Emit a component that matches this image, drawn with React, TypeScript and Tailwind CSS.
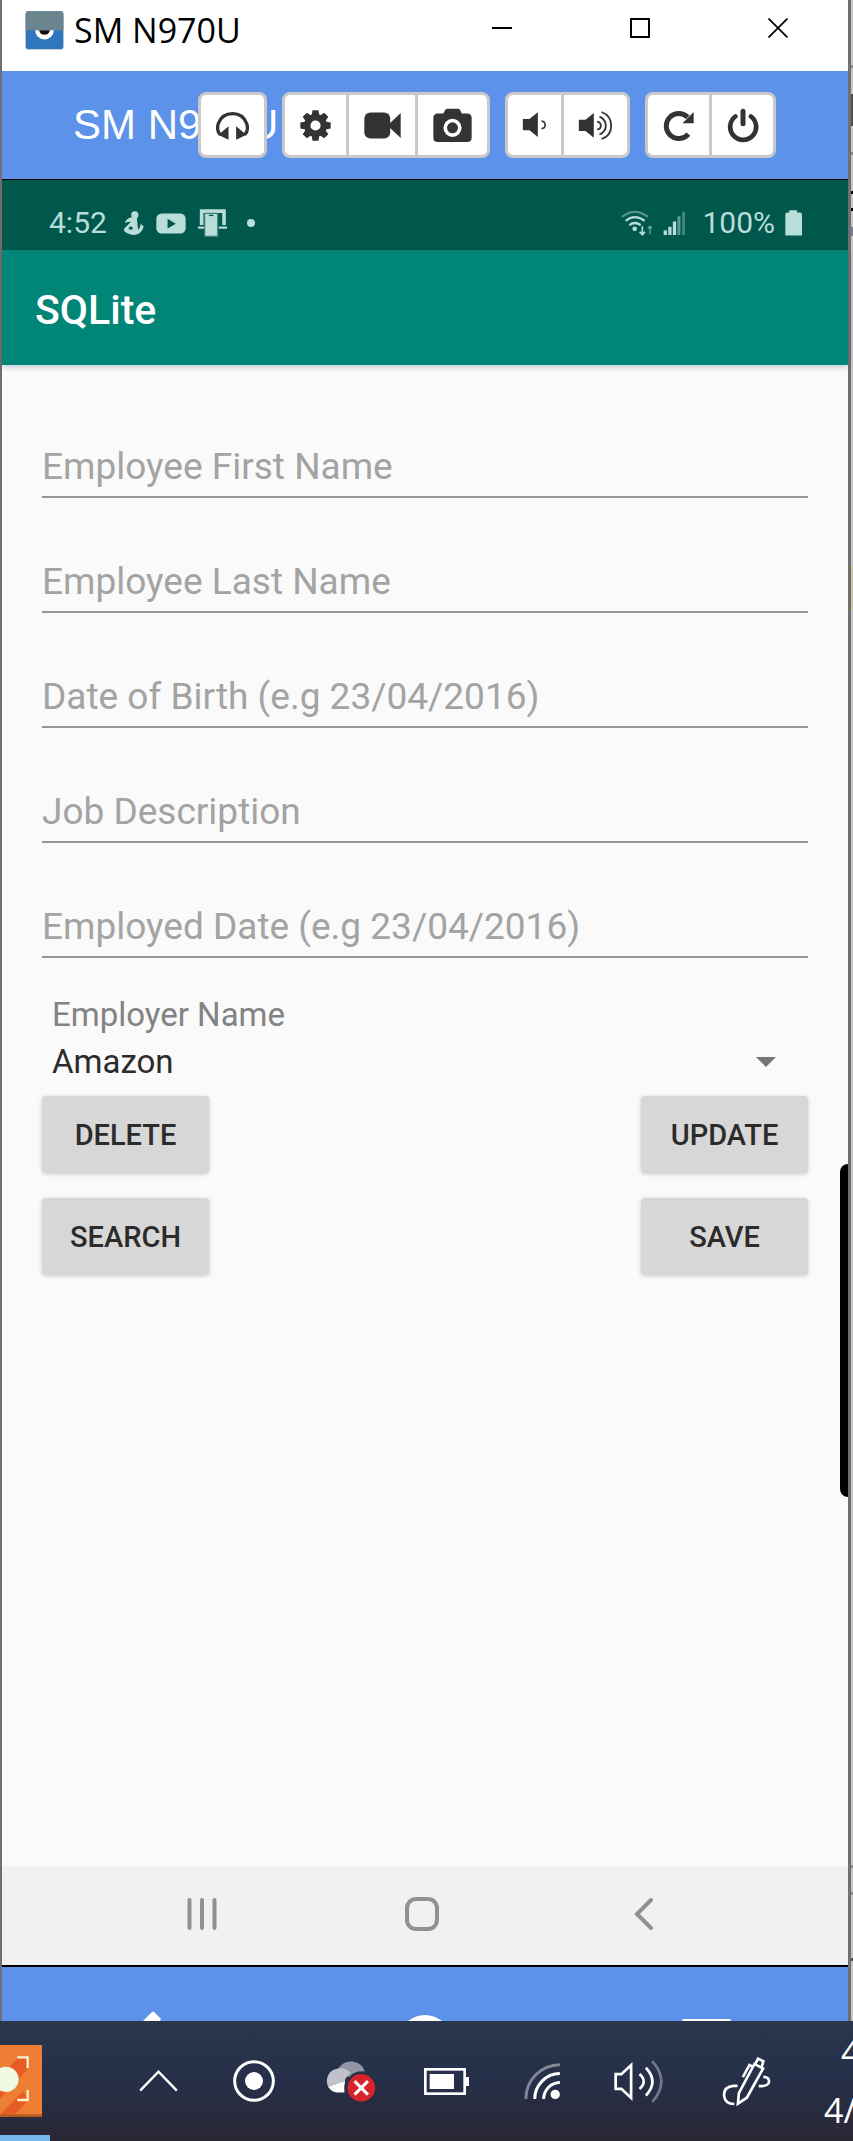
import React from "react";

/* ---------- window chrome ---------- */

const AppLogo = () => (
  <svg viewBox="74 26 116 118" className="h-[39px] w-[39px] shrink-0" aria-hidden="true">
    <rect x="75" y="30" width="114" height="114" rx="7" fill="#c9ccd0" />
    <rect x="75" y="27" width="114" height="114" rx="7" fill="#2f76bd" />
    <path d="M75 84V34a7 7 0 0 1 7-7h100a7 7 0 0 1 7 7v50z" fill="#6b858f" />
    <path d="M104 84a28 28 0 0 0 56 0z" fill="#fff" />
    <path d="M116 84a16 14 0 0 0 32 0z" fill="#111" />
  </svg>
);

const MinimizeIcon = () => (
  <svg viewBox="0 0 20 20" className="h-5 w-5" aria-hidden="true">
    <path d="M0 10h20" stroke="#000" strokeWidth="2" />
  </svg>
);
const MaximizeIcon = () => (
  <svg viewBox="0 0 20 20" className="h-5 w-5" aria-hidden="true">
    <rect x="1" y="1" width="18" height="18" fill="none" stroke="#000" strokeWidth="2" />
  </svg>
);
const CloseIcon = () => (
  <svg viewBox="0 0 20 20" className="h-5 w-5" aria-hidden="true">
    <path d="M.5.5l19 19M19.500.5l-19 19" stroke="#000" strokeWidth="1.700" />
  </svg>
);

/* ---------- toolbar icons ---------- */

const HeadphonesIcon = () => (
  <svg viewBox="646 328 104 88" className="h-[29px] w-[35px]" aria-hidden="true">
    <path d="M661 400C650 391 652 374 655 366C662 347 678 336 698 336S734 347 741 366C744 374 746 391 735 400" fill="none" stroke="#333" strokeWidth="10" />
    <path d="M686 374V415L656 401L666 391zM709 374V415L739 401L729 391z" fill="#333" />
  </svg>
);
const GearIcon = () => (
  <svg viewBox="-47 -47 94 94" className="h-[31px] w-[31px]" aria-hidden="true">
    <circle r="25" fill="none" stroke="#333" strokeWidth="19" />
    {[0, 45, 90, 135].map((a) => (
      <path key={a} d="M-9-46H9L12-30H-12zM-9 46H9L12 30H-12z" fill="#333" transform={`rotate(${a})`} />
    ))}
  </svg>
);
const VideoIcon = () => (
  <svg viewBox="1091 335 110 80" className="h-[27px] w-[37px]" aria-hidden="true">
    <rect x="1092" y="336" width="77" height="78" rx="18" fill="#333" />
    <path d="M1200 338V412L1168 382V368z" fill="#333" />
  </svg>
);
const CameraIcon = () => (
  <svg viewBox="29 320 118 104" className="h-[35px] w-[39px]" aria-hidden="true">
    <path d="M44 336H60L66 325Q68 321 73 321H104Q109 321 111 325L116 336H132Q146 336 146 350V408Q146 422 132 422H44Q30 422 30 408V350Q30 336 44 336z" fill="#333" />
    <circle cx="88" cy="379" r="22" fill="#333" stroke="#fff" strokeWidth="11" />
  </svg>
);
const VolumeLowIcon = () => (
  <svg viewBox="298 334 74 84" className="h-7 w-[25px]" aria-hidden="true">
    <path d="M300 358H320L345 338V412L320 392H300z" fill="#333" />
    <path d="M356 364Q367 366 367 376T356 387" fill="none" stroke="#333" strokeWidth="5" />
  </svg>
);
const VolumeHighIcon = () => (
  <svg viewBox="466 332 104 87" className="h-[29px] w-[35px]" aria-hidden="true">
    <path d="M468 358H488L513 338V412L488 392H468z" fill="#333" />
    <path d="M523 364Q534 366 534 376T523 387M530 349Q549 358 549 376T530 402M536 335Q565 346 565 376T536 416" fill="none" stroke="#333" strokeWidth="5.500" />
  </svg>
);
const RefreshIcon = () => (
  <svg viewBox="720 328 94 94" className="h-[31px] w-[31px]" aria-hidden="true">
    <path d="M795 350A38 38 0 1 0 797 401" fill="none" stroke="#333" strokeWidth="15" />
    <path d="M813 334V368H779z" fill="#333" />
  </svg>
);
const PowerIcon = () => (
  <svg viewBox="911 320 96 104" className="h-[35px] w-8" aria-hidden="true">
    <path d="M936 345A39 39 0 1 0 983 345" fill="none" stroke="#333" strokeWidth="14" strokeLinecap="round" />
    <path d="M959 329V367" stroke="#333" strokeWidth="15" strokeLinecap="round" />
  </svg>
);

/* ---------- phone status icons ---------- */

const FigureIcon = () => (
  <svg viewBox="374 629 64 76" className="h-[25px] w-[21px]" aria-hidden="true" fill="#b9ddd9">
    <circle cx="410" cy="641" r="11" />
    <path d="M400 648Q382 652 380 666Q388 662 398 662L378 682Q374 692 386 696Q404 706 418 700Q434 692 437 676L428 668Q426 682 420 686L416 650z" />
    <path d="M390 680l10-5 5 9-10 2z" fill="#00574b" />
  </svg>
);
const YoutubeIcon = () => (
  <svg viewBox="476 635 91 63" className="h-[21px] w-[30px]" aria-hidden="true">
    <rect x="477" y="636" width="89" height="61" rx="16" fill="#b9ddd9" />
    <path d="M511 652V682L536 667z" fill="#00574b" />
  </svg>
);
const DevicesIcon = () => (
  <svg viewBox="597 628 88 84" className="h-7 w-[29px]" aria-hidden="true">
    <path d="M608 676V634H676V676" fill="none" stroke="#b9ddd9" strokeWidth="11" />
    <path d="M597 684H616M660 684H685" stroke="#b9ddd9" strokeWidth="7" />
    <rect x="617" y="641" width="40" height="70" rx="4" fill="#b9ddd9" stroke="#3c7f77" strokeWidth="4" />
    <path d="M630 647H644" stroke="#00574b" strokeWidth="4" />
  </svg>
);
const PhoneWifiIcon = () => (
  <svg viewBox="597 626 96 80" className="h-[27px] w-8" aria-hidden="true" fill="none" stroke="#b9ddd9">
    <path d="M600 646Q638 616 678 646" strokeWidth="7" opacity=".45" />
    <path d="M611 658Q638 636 668 658M622 671Q638 658 656 671" strokeWidth="7" />
    <circle cx="638" cy="682" r="7" fill="#b9ddd9" stroke="none" />
    <path d="M661 674V700M653 691L661 700L669 691" strokeWidth="5" />
    <path d="M684 698V674M678 681L684 674L690 681" strokeWidth="4" opacity=".6" />
  </svg>
);
const SignalIcon = () => (
  <svg viewBox="720 630 68 76" className="h-[25px] w-[23px]" aria-hidden="true" fill="#b9ddd9">
    <rect x="721" y="689" width="10" height="14" />
    <rect x="735" y="678" width="10" height="25" />
    <rect x="749" y="662" width="10" height="41" />
    <rect x="763" y="646" width="9" height="57" opacity=".5" />
    <rect x="777" y="632" width="9" height="71" opacity=".35" />
  </svg>
);
const PhoneBatteryIcon = () => (
  <svg viewBox="1086 627 52 78" className="h-[26px] w-[17px]" aria-hidden="true">
    <path d="M1099 634V627H1123V634H1132Q1138 634 1138 640V704H1087V640Q1087 634 1093 634z" fill="#b9ddd9" />
  </svg>
);

/* ---------- phone navigation icons ---------- */

const RecentsIcon = () => (
  <svg viewBox="0 0 30 32" className="h-8 w-[30px]" aria-hidden="true">
    <path d="M2.500 2v28M15 2v28M27.500 2v28" stroke="#919193" strokeWidth="4" strokeLinecap="round" />
  </svg>
);
const HomeIcon = () => (
  <svg viewBox="0 0 34 34" className="h-[34px] w-[34px]" aria-hidden="true">
    <rect x="2" y="2" width="30" height="30" rx="9" fill="none" stroke="#919193" strokeWidth="4" />
  </svg>
);
const BackIcon = () => (
  <svg viewBox="0 0 20 32" className="h-8 w-5" aria-hidden="true">
    <path d="M17 2L3 16L17 30" fill="none" stroke="#919193" strokeWidth="4" strokeLinecap="round" />
  </svg>
);

/* ---------- taskbar icons ---------- */

const RecorderApp = () => (
  <svg viewBox="0 615 126 216" className="h-[72px] w-[42px]" aria-hidden="true">
    <rect y="615" width="126" height="216" fill="#ee7e33" />
    <path d="M0 712L56 650H87V685L0 776z" fill="#e85d25" />
    <path d="M0 823L70 754L87 780L45 823z" fill="#e85d25" />
    <rect y="823" width="126" height="8" fill="#b35a20" />
    <circle cx="18" cy="718" r="38" fill="#f0fae0" />
    <path d="M52 652H83V685M52 780H83V750" fill="none" stroke="#f6f5cf" strokeWidth="7" />
  </svg>
);
const ChevronUpIcon = () => (
  <svg viewBox="416 688 116 66" className="h-[22px] w-[39px]" aria-hidden="true">
    <path d="M419 750L474 693L529 750" fill="none" stroke="#fff" strokeWidth="7" />
  </svg>
);
const RecordIcon = () => (
  <svg viewBox="0 0 126 126" className="h-[42px] w-[42px]" aria-hidden="true">
    <circle cx="63" cy="63" r="58" fill="none" stroke="#fff" strokeWidth="9" />
    <circle cx="63" cy="63" r="27" fill="#fff" />
  </svg>
);
const CloudErrorIcon = () => (
  <svg viewBox="977 674 146 122" className="h-[41px] w-[49px]" aria-hidden="true">
    <path d="M1013 698A44 44 0 0 1 1093 705Q1062 702 1046 722z" fill="#9196a2" />
    <path d="M984 752A38 38 0 0 1 1013 696Q1038 694 1051 710Q1036 722 1033 733L986 755z" fill="#bfc2ca" />
    <path d="M985 752L1034 733Q1030 750 1032 768H1010Q993 766 985 752z" fill="#fff" />
    <circle cx="1082" cy="754" r="41" fill="#d9222a" />
    <path d="M1062 734L1102 774M1102 734L1062 774" stroke="#fff" strokeWidth="9" />
  </svg>
);
const BatteryIcon = () => (
  <svg viewBox="0 0 135 81" className="h-[27px] w-[45px]" aria-hidden="true">
    <rect x="4" y="4" width="118" height="73" fill="none" stroke="#fff" strokeWidth="8" />
    <rect x="17" y="18" width="73" height="45" fill="#fff" />
    <rect x="126" y="27" width="9" height="27" fill="#fff" />
  </svg>
);
const WifiIcon = () => (
  <svg viewBox="312 677 108 109" className="h-9 w-9" aria-hidden="true" fill="none" stroke="#fff">
    <path d="M317 786A104 104 0 0 1 420 682" strokeWidth="9" opacity=".42" />
    <path d="M344 786A77 77 0 0 1 420 709M371 786A50 50 0 0 1 420 736" strokeWidth="9" />
    <circle cx="406" cy="772" r="14" fill="#fff" stroke="none" />
  </svg>
);
const SpeakerIcon = () => (
  <svg viewBox="572 659 146 128" className="h-[43px] w-[49px]" aria-hidden="true" fill="none" stroke="#fff">
    <path d="M577 701H594L623 674V772L594 745H577z" strokeWidth="8" />
    <path d="M648 701Q673 723 648 745M667 682Q706 723 667 765" strokeWidth="8" />
    <path d="M686 662Q740 723 686 784" strokeWidth="8" opacity=".35" />
  </svg>
);
const PenIcon = () => (
  <svg viewBox="895 650 148 146" className="h-[49px] w-[49px]" aria-hidden="true" fill="none" stroke="#fff" strokeWidth="8">
    <path d="M942 736H930Q901 738 901 765Q904 791 932 791" />
    <path d="M943 790L946 758L993 670L1019 684L970 772z" />
    <path d="M996 669L1004 654L1020 662L1014 682" />
    <path d="M958 710L978 673L988 678" />
    <path d="M1020 709Q1038 710 1037 724Q1035 738 1006 737" />
  </svg>
);

/* ---------- building blocks ---------- */

type ToolButton = { label: string; width: string; icon: React.ReactNode };

const toolGroups: ToolButton[][] = [
  [{ label: "Audio", width: "w-[63px]", icon: <HeadphonesIcon /> }],
  [
    { label: "Settings", width: "w-16", icon: <GearIcon /> },
    { label: "Record video", width: "w-[69px]", icon: <VideoIcon /> },
    { label: "Screenshot", width: "w-[69px]", icon: <CameraIcon /> },
  ],
  [
    { label: "Volume down", width: "w-14", icon: <VolumeLowIcon /> },
    { label: "Volume up", width: "w-[63px]", icon: <VolumeHighIcon /> },
  ],
  [
    { label: "Rotate", width: "w-16", icon: <RefreshIcon /> },
    { label: "Power", width: "w-[61px]", icon: <PowerIcon /> },
  ],
];

const fields = [
  { id: "first-name", hint: "Employee First Name" },
  { id: "last-name", hint: "Employee Last Name" },
  { id: "birth-date", hint: "Date of Birth (e.g 23/04/2016)" },
  { id: "job", hint: "Job Description" },
  { id: "employed-date", hint: "Employed Date (e.g 23/04/2016)" },
];

const actions = ["DELETE", "UPDATE", "SEARCH", "SAVE"];

const trayItems = [
  { label: "Show hidden icons", icon: <ChevronUpIcon /> },
  { label: "Recorder", icon: <RecordIcon /> },
  { label: "Cloud sync error", icon: <CloudErrorIcon /> },
  { label: "Battery", icon: <BatteryIcon /> },
  { label: "Network", icon: <WifiIcon /> },
  { label: "Volume", icon: <SpeakerIcon /> },
];

function ActionButton({ label }: { label: string }) {
  return (
    <button
      type="button"
      className="h-[77px] w-[167px] rounded-sm bg-[#d7d7d7] pt-0.5 text-[29px] font-medium text-[#2b2b2b] shadow-[0_1px_4px_rgba(0,0,0,0.2)]"
    >
      {label}
    </button>
  );
}

function TitleBar() {
  return (
    <header className="flex h-[71px] shrink-0 items-start bg-white pl-[23px] pr-[60px]">
      <div className="flex flex-1 items-center gap-2.5 pt-1.5">
        <AppLogo />
        <span className="font-['Open_Sans','Noto_Sans',sans-serif] text-[34px] leading-[48px] text-black">SM N970U</span>
      </div>
      <div className="flex gap-[118px] pt-[18px]">
        <button type="button" aria-label="Minimize"><MinimizeIcon /></button>
        <button type="button" aria-label="Maximize"><MaximizeIcon /></button>
        <button type="button" aria-label="Close"><CloseIcon /></button>
      </div>
    </header>
  );
}

function Toolbar() {
  return (
    <div className="grid h-[108px] shrink-0 items-center bg-[#5c92e9] pl-[71px] pr-[72px]">
      <h1 className="col-start-1 row-start-1 font-['Liberation_Sans',Arial,sans-serif] text-[42px] leading-[48px] text-white">
        SM N970U
      </h1>
      <div className="z-10 col-start-1 row-start-1 flex justify-end gap-[15px]">
        {toolGroups.map((group) => (
          <div
            key={group[0].label}
            className="flex h-[66px] divide-x-3 divide-[#c9c9c9] overflow-hidden rounded-lg border-3 border-[#c9c9c9] bg-white"
          >
            {group.map((b) => (
              <button key={b.label} type="button" aria-label={b.label} className={`flex items-center justify-center ${b.width}`}>
                {b.icon}
              </button>
            ))}
          </div>
        ))}
      </div>
    </div>
  );
}

function StatusBar() {
  return (
    <div className="flex h-[70px] items-center justify-between bg-[#00574b] pl-[47px] pr-[46px] pt-4 text-[30px] leading-9 text-[#b9ddd9]">
      <div className="flex items-center">
        <span className="mr-4">4:52</span>
        <span className="flex items-center gap-3">
          <FigureIcon />
          <YoutubeIcon />
          <DevicesIcon />
          <span className="ml-2 h-2 w-2 rounded-full bg-[#b9ddd9]" />
        </span>
      </div>
      <div className="flex items-center gap-2.5">
        <PhoneWifiIcon />
        <SignalIcon />
        <span className="ml-1.5">100%</span>
        <PhoneBatteryIcon />
      </div>
    </div>
  );
}

function EmployeeForm() {
  return (
    <form className="flex flex-1 flex-col bg-[#fafafa] px-10 pt-[71px]">
      <div className="flex flex-col gap-[53px]">
        {fields.map((f) => (
          <input
            key={f.id}
            id={f.id}
            type="text"
            aria-label={f.hint}
            placeholder={f.hint}
            className="h-[62px] w-full border-b-2 border-[#979797] bg-transparent text-[37px] text-[#333] outline-none placeholder:text-[#a3a3a3]"
          />
        ))}
      </div>
      <div className="mt-[33px] flex flex-col pl-2.5 text-[33px] leading-[47px]">
        <label htmlFor="employer" className="text-[#838383]">Employer Name</label>
        <div className="grid items-center">
          <select
            id="employer"
            defaultValue="Amazon"
            className="col-start-1 row-start-1 h-[47px] w-full appearance-none bg-transparent text-[#2b2b2b] outline-none"
          >
            <option>Amazon</option>
          </select>
          <svg viewBox="0 0 20 10" className="pointer-events-none col-start-1 row-start-1 mr-8 h-2.5 w-5 justify-self-end" aria-hidden="true">
            <path d="M0 0H20L10 10z" fill="#757575" />
          </svg>
        </div>
      </div>
      <div className="mt-[11px] grid grid-cols-[auto_auto] justify-between gap-y-[25px]">
        {actions.map((label) => (
          <ActionButton key={label} label={label} />
        ))}
      </div>
    </form>
  );
}

function PhoneNav() {
  return (
    <nav className="grid h-[99px] shrink-0 grid-cols-[1fr_417px_1fr] items-center bg-[#f1f1f1]">
      <button type="button" aria-label="Recents" className="flex justify-end pb-1"><RecentsIcon /></button>
      <button type="button" aria-label="Home" className="flex justify-center pb-1 pr-1.5"><HomeIcon /></button>
      <button type="button" aria-label="Back" className="flex pb-1"><BackIcon /></button>
    </nav>
  );
}

function SideStrip() {
  return (
    <div className="flex w-[5px] shrink-0 flex-col overflow-hidden border-l-3 border-[#707070] bg-[#c6c6c6]" aria-hidden="true">
      <div className="mt-[65px] h-[3px] bg-[#8d8d8d]" />
      <div className="mt-[26px] h-8 bg-[#4f4f4f]" />
      <div className="mt-[26px] h-[3px] bg-[#8d8d8d]" />
      <div className="mt-9 h-[3px] bg-black" />
      <div className="mt-[14px] h-[3px] bg-black" />
      <div className="mt-4 h-[9px] bg-[#777b8b]" />
      <div className="mt-[330px] h-11 bg-[#c9c6a4]" />
      <div className="mt-auto h-[3px] bg-[#8d8d8d]" />
      <div className="mt-6 h-[3px] bg-[#8d8d8d]" />
      <div className="mb-[60px] mt-[63px] h-[3px] bg-[#555]" />
    </div>
  );
}

function Taskbar() {
  return (
    <footer className="flex h-[120px] shrink-0 overflow-hidden bg-linear-to-b from-[#28384a] via-[#262f49] to-[#2a2733]">
      <div className="flex w-[50px] shrink-0 flex-col justify-between pt-6">
        <RecorderApp />
        <div className="h-1.5 bg-[#76b9ed]" />
      </div>
      <div className="flex flex-1 items-center pl-[60px] pr-[18px]">
        {trayItems.map((item) => (
          <button key={item.label} type="button" aria-label={item.label} className="flex flex-1 justify-center">
            {item.icon}
          </button>
        ))}
        <button type="button" aria-label="Pen workspace" className="flex w-[120px] justify-center">
          <PenIcon />
        </button>
      </div>
      <div className="flex w-[29px] shrink-0 flex-col overflow-hidden whitespace-nowrap pt-0.5 font-['Open_Sans','Noto_Sans',sans-serif] text-[34px] leading-[58px] text-white">
        <span className="pl-[17px]">4</span>
        <span>4/</span>
      </div>
    </footer>
  );
}

export default function App() {
  return (
    <div className="flex min-h-screen flex-col font-[Roboto,sans-serif]">
      <div className="flex flex-1">
        <div className="w-0.5 shrink-0 bg-[#6f6f6f]" />
        <div className="flex min-w-0 flex-1 flex-col">
          <TitleBar />
          <Toolbar />
          <section className="relative flex flex-1 flex-col border-b-2 border-t border-black">
            <StatusBar />
            <div className="z-10 flex h-[115px] shrink-0 items-center bg-[#008577] pl-[33px] pt-1.5 text-[41px] font-medium text-white shadow-[0_2px_6px_rgba(40,60,110,0.25)]">
              <h2>SQLite</h2>
            </div>
            <EmployeeForm />
            <PhoneNav />
            <div className="absolute right-0 top-[984px] h-[333px] w-2 rounded-l-lg bg-black" />
          </section>
          <div className="flex h-[54px] shrink-0 items-end justify-between bg-[#5c92e9] pl-[141px] pr-[117px]">
            <svg viewBox="0 0 19 10" className="h-2.5 w-[19px]" aria-hidden="true">
              <path d="M0 10L9 1Q10 0 11 1L18 8L17 10z" fill="#fff" />
            </svg>
            <svg viewBox="0 0 34 6" className="ml-1.5 h-1.5 w-[34px]" aria-hidden="true">
              <path d="M0 6Q8 0 17 0T34 6z" fill="#fff" />
            </svg>
            <div className="h-0.5 w-[49px] rounded-t-sm bg-white" />
          </div>
        </div>
        <SideStrip />
      </div>
      <Taskbar />
    </div>
  );
}
